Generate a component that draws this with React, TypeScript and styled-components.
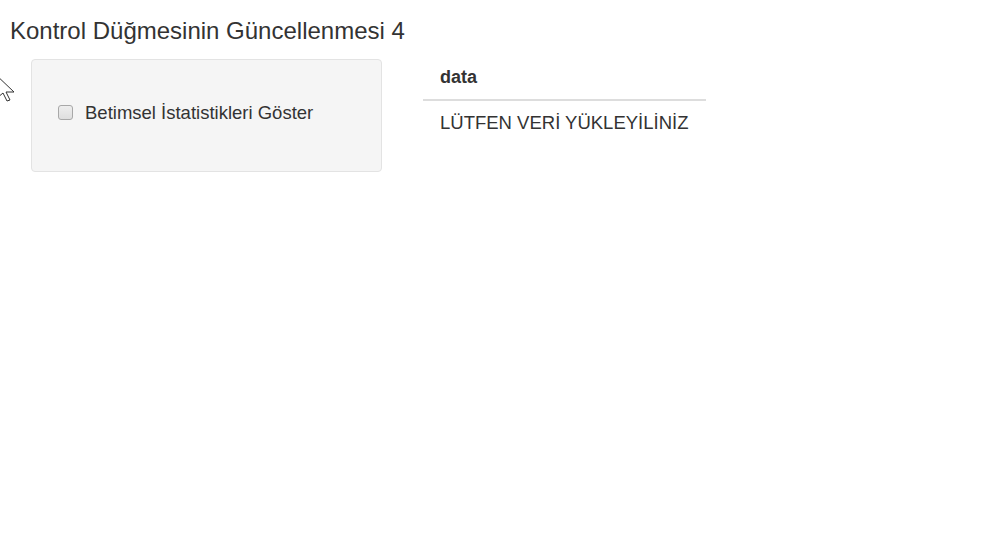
import React from "react";
import styled, { createGlobalStyle } from "styled-components";

const Global = createGlobalStyle`
  body {
    margin: 0;
    background: #ffffff;
    font-family: "Liberation Sans", Arial, sans-serif;
    color: #333333;
  }
`;

const Page = styled.div`
  position: relative;
  width: 1000px;
  height: 534px;
  overflow: hidden;
`;

const Title = styled.h2`
  margin: 0;
  padding: 17px 0 0 10px;
  font-size: 24px;
  font-weight: normal;
  line-height: 28px;
  color: #333333;
`;

const Row = styled.div`
  display: flex;
  align-items: flex-start;
  padding: 14px 0 0 31px;
  gap: 41px;
`;

const Well = styled.div`
  box-sizing: border-box;
  width: 351px;
  height: 113px;
  background: #f5f5f5;
  border: 1px solid #e3e3e3;
  border-radius: 4px;
  display: flex;
  align-items: center;
  padding: 0 0 6px 26px;
`;

const CheckLabel = styled.label`
  display: flex;
  align-items: center;
  gap: 12px;
  font-size: 18.5px;
  color: #333333;
`;

const Box = styled.span`
  box-sizing: border-box;
  width: 15px;
  height: 15px;
  border: 1px solid #a8a8a8;
  border-radius: 3px;
  background: linear-gradient(#eeeeee, #dedede);
`;

const Table = styled.table`
  width: 283px;
  border-collapse: collapse;
  margin-top: 2px;
  font-size: 18.5px;
  th {
    text-align: left;
    font-weight: bold;
    font-size: 18px;
    padding: 6px 17px 11px;
    border-bottom: 2px solid #dddddd;
  }
  td {
    padding: 11px 17px 8px;
  }
`;

const Cursor = styled.svg`
  position: absolute;
  left: -8px;
  top: 71px;
`;

export default function App() {
  return (
    <Page>
      <Global />
      <Title>Kontrol Düğmesinin Güncellenmesi 4</Title>
      <Row>
        <Well>
          <CheckLabel>
            <Box />
            Betimsel İstatistikleri Göster
          </CheckLabel>
        </Well>
        <Table>
          <thead>
            <tr>
              <th>data</th>
            </tr>
          </thead>
          <tbody>
            <tr>
              <td>LÜTFEN VERİ YÜKLEYİLİNİZ</td>
            </tr>
          </tbody>
        </Table>
      </Row>
      <Cursor width="26" height="32" viewBox="0 0 26 32">
        <path
          d="M1 1 L22 21 L14 21 L18 29 L15 30 L11 22 L5 27 Z"
          fill="#ffffff"
          stroke="#333333"
          strokeWidth="1"
          strokeLinejoin="round"
        />
      </Cursor>
    </Page>
  );
}
